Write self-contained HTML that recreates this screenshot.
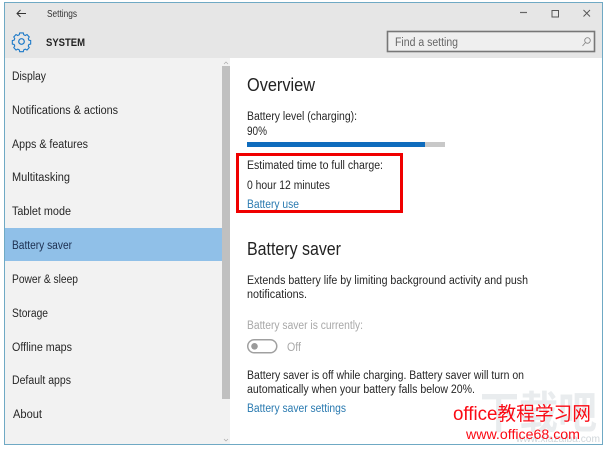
<!DOCTYPE html>
<html><head><meta charset="utf-8"><title>Settings</title>
<style>
html,body{margin:0;padding:0;background:#fff;width:609px;height:450px;overflow:hidden}
svg{display:block;font-family:"Liberation Sans","Noto Sans CJK SC",sans-serif;filter:blur(.3px)}
</style></head><body>
<svg width="609" height="450" viewBox="0 0 609 450" xmlns="http://www.w3.org/2000/svg">
<rect width="609" height="450" fill="#fff"/>
<rect x="4.500" y="2.500" width="598" height="442" fill="#fff" stroke="#6fa9c4" stroke-width="1"/>
<rect x="5" y="3" width="597" height="55" fill="#e6e6e6"/>
<rect x="5" y="58" width="225" height="386" fill="#f2f2f2"/>
<rect x="5" y="228" width="217" height="33" fill="#90c0e8"/>
<rect x="222" y="66" width="8" height="333" fill="#c0c0c0"/>
<path d="M224 64l2-2 2 2M224 439l2 2 2-2" fill="none" stroke="#aaa" stroke-width=".7"/>

<path d="M26 13.500H17M20.500 10L17 13.500l3.500 3.500" fill="none" stroke="#333" stroke-width="1"/>
<g fill="none" stroke="#1a78c8" stroke-width="1.200">
<circle cx="21.500" cy="41.500" r="2.800"/>
<path d="M19.500 33.500h4l.5 2 1.700 .8 1.900-1 2.500 2.700-1.100 1.800 .7 1.700 2 .5v3.800l-2 .5-.7 1.700 1.100 1.800-2.500 2.700-1.900-1-1.700 .8-.5 2h-4l-.5-2-1.700-.8-1.900 1-2.500-2.700 1.100-1.800-.7-1.700-2-.5v-3.800l2-.5 .7-1.700-1.100-1.800 2.500-2.700 1.900 1 1.700-.8z" transform="translate(21.500 41.500) scale(.9) translate(-21.500 -43)"/>
</g>
<text x="47" y="17" font-size="10" fill="#333" textLength="30" lengthAdjust="spacingAndGlyphs">Settings</text>
<text x="46" y="46" font-size="11" font-weight="bold" fill="#222" textLength="39" lengthAdjust="spacingAndGlyphs">SYSTEM</text>

<path d="M520 12.500h7" stroke="#666" stroke-width="1.200"/>
<rect x="552" y="10.500" width="6.500" height="6.500" fill="none" stroke="#555" stroke-width="1"/>
<path d="M583.500 10l6.500 6.500M590 10l-6.500 6.500" stroke="#555" stroke-width=".9"/>
<rect x="387.500" y="31.500" width="207" height="20" fill="#efefef" stroke="#777" stroke-width="1.600"/>
<text x="395" y="46" font-size="11.500" fill="#666" textLength="63" lengthAdjust="spacingAndGlyphs">Find a setting</text>
<circle cx="587.500" cy="40.500" r="2.800" fill="none" stroke="#888" stroke-width=".9"/>
<path d="M585.500 42.500L582.500 46" stroke="#888" stroke-width=".9"/>

<g font-size="11.500" fill="#262626">
<text x="12" y="80" textLength="34" lengthAdjust="spacingAndGlyphs">Display</text>
<text x="12" y="114" textLength="106" lengthAdjust="spacingAndGlyphs">Notifications &amp; actions</text>
<text x="12" y="148" textLength="76" lengthAdjust="spacingAndGlyphs">Apps &amp; features</text>
<text x="12" y="181" textLength="58" lengthAdjust="spacingAndGlyphs">Multitasking</text>
<text x="12" y="215" textLength="59" lengthAdjust="spacingAndGlyphs">Tablet mode</text>
<text x="12" y="249" fill="#1c2f50" textLength="60" lengthAdjust="spacingAndGlyphs">Battery saver</text>
<text x="12" y="283" textLength="66" lengthAdjust="spacingAndGlyphs">Power &amp; sleep</text>
<text x="12" y="317" textLength="36" lengthAdjust="spacingAndGlyphs">Storage</text>
<text x="12" y="351" textLength="60" lengthAdjust="spacingAndGlyphs">Offline maps</text>
<text x="12" y="384" textLength="59" lengthAdjust="spacingAndGlyphs">Default apps</text>
<text x="13" y="418" textLength="29" lengthAdjust="spacingAndGlyphs">About</text>
</g>

<text x="247" y="91" font-size="18" fill="#222" textLength="68" lengthAdjust="spacingAndGlyphs">Overview</text>
<g font-size="11.500" fill="#262626">
<text x="247" y="120" textLength="110" lengthAdjust="spacingAndGlyphs">Battery level (charging):</text>
<text x="247" y="135" textLength="20" lengthAdjust="spacingAndGlyphs">90%</text>
<text x="247" y="169" textLength="136" lengthAdjust="spacingAndGlyphs">Estimated time to full charge:</text>
<text x="247" y="189" textLength="83" lengthAdjust="spacingAndGlyphs">0 hour 12 minutes</text>
</g>
<rect x="247" y="142" width="178" height="5" fill="#0f6cbd"/>
<rect x="425" y="142" width="20" height="5" fill="#c8c8c8"/>
<text x="247" y="208" font-size="11.500" fill="#2a7ab0" textLength="52" lengthAdjust="spacingAndGlyphs">Battery use</text>
<rect x="237.500" y="154.500" width="164" height="57" fill="none" stroke="#f00000" stroke-width="3"/>

<text x="247" y="255" font-size="18" fill="#222" textLength="94" lengthAdjust="spacingAndGlyphs">Battery saver</text>
<g font-size="11.500" fill="#262626">
<text x="247" y="284" textLength="281" lengthAdjust="spacingAndGlyphs">Extends battery life by limiting background activity and push</text>
<text x="247" y="298" textLength="60" lengthAdjust="spacingAndGlyphs">notifications.</text>
</g>
<text x="247" y="329" font-size="11.500" fill="#a8a8a8" textLength="116" lengthAdjust="spacingAndGlyphs">Battery saver is currently:</text>
<rect x="247.750" y="339.750" width="29" height="13" rx="6.500" fill="none" stroke="#a0a0a0" stroke-width="1.500"/>
<circle cx="254.500" cy="346.300" r="3.300" fill="#9a9a9a"/>
<text x="287" y="351" font-size="11.500" fill="#a8a8a8" textLength="14" lengthAdjust="spacingAndGlyphs">Off</text>

<text x="480" y="428" font-size="44" font-weight="bold" fill="#e9ecee" textLength="117" lengthAdjust="spacingAndGlyphs">下载吧</text>
<text x="516" y="442" font-size="10" fill="#d0d6da" textLength="84" lengthAdjust="spacingAndGlyphs">www.xiazaiba.com</text>

<g font-size="11.500" fill="#262626">
<text x="247" y="379" textLength="277" lengthAdjust="spacingAndGlyphs">Battery saver is off while charging. Battery saver will turn on</text>
<text x="247" y="393" textLength="228" lengthAdjust="spacingAndGlyphs">automatically when your battery falls below 20%.</text>
</g>
<text x="247" y="412" font-size="11.500" fill="#2a7ab0" textLength="99" lengthAdjust="spacingAndGlyphs">Battery saver settings</text>

<text x="453" y="420" font-size="19" fill="#fb0a14" textLength="138" lengthAdjust="spacingAndGlyphs">office教程学习网</text>
<text x="466" y="439" font-size="14" fill="#fb0a14" textLength="114" lengthAdjust="spacingAndGlyphs">www.office68.com</text>
</svg>
</body></html>
